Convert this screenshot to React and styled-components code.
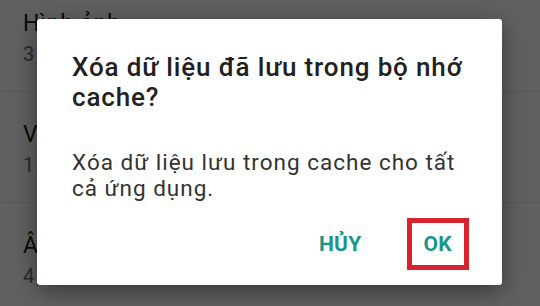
import React from 'react';
import styled, { createGlobalStyle } from 'styled-components';

const GlobalStyle = createGlobalStyle`
    html, body {
        margin: 0;
        padding: 0;
        background: #ffffff;
    }
    body {
        font-family: Roboto, "Noto Sans", "Liberation Sans", sans-serif;
    }
`;

const Screen = styled.div`
    position: relative;
    width: 540px;
    height: 306px;
    overflow: hidden;
    background: #ffffff;
`;

// settings list, scrolled a little so the first row is cut at the top
const List = styled.ul`
    list-style: none;
    margin: -19px 0 0;
    padding: 0;
`;

const Row = styled.li`
    box-sizing: border-box;
    height: 111px;
    padding: 29px 0 0 23px;
    border-bottom: 1px solid #e4e4e4;
`;

const RowTitle = styled.div`
    font-size: 23px;
    line-height: 28px;
    letter-spacing: 0.8px;
    color: #1c1c1c;
`;

const RowSub = styled.div`
    margin-top: 4px;
    font-size: 20px;
    line-height: 24px;
    letter-spacing: 2px;
    color: #6f6f6f;
`;

const Backdrop = styled.div`
    position: absolute;
    inset: 0;
    background: rgba(0, 0, 0, 0.62);
`;

const Dialog = styled.div`
    position: absolute;
    left: 37px;
    top: 19px;
    width: 465px;
    box-sizing: border-box;
    padding: 33px 30px 15px 35px;
    background: #ffffff;
    border-radius: 3px;
    box-shadow: 0 6px 24px rgba(0, 0, 0, 0.45);
    display: flex;
    flex-direction: column;
`;

const Title = styled.h2`
    margin: 0;
    font-size: 26px;
    line-height: 30px;
    font-weight: 500;
    letter-spacing: 0.85px;
    color: #212121;
`;

const Message = styled.p`
    margin: 38px 0 0;
    font-size: 22.5px;
    line-height: 25.5px;
    font-weight: 400;
    letter-spacing: 1px;
    color: #333333;
`;

const Actions = styled.div`
    margin-top: 17px;
    margin-right: 3px;
    display: flex;
    justify-content: flex-end;
    align-items: center;
    gap: 28px;
`;

const Button = styled.button`
    box-sizing: border-box;
    height: 52px;
    min-width: 61px;
    padding: 0 12px;
    border: ${({ $marked }) => ($marked ? '5px solid #d8232e' : '5px solid transparent')};
    background: transparent;
    font-family: Roboto, "Liberation Sans", sans-serif;
    font-size: 21px;
    font-weight: 700;
    color: #17978a;
    letter-spacing: 0.3px;
    cursor: pointer;
`;

const rows = [
    { title: 'Hình ảnh', sub: '3,52 GB' },
    { title: 'Video', sub: '1,24 GB' },
    { title: 'Âm thanh', sub: '4,18 MB' },
];

const App = () => {
    return (
        <Screen>
            <GlobalStyle />
            <List>
                {rows.map((r) => (
                    <Row key={r.title}>
                        <RowTitle>{r.title}</RowTitle>
                        <RowSub>{r.sub}</RowSub>
                    </Row>
                ))}
            </List>
            <Backdrop />
            <Dialog>
                <Title>Xóa dữ liệu đã lưu trong bộ nhớ cache?</Title>
                <Message>Xóa dữ liệu lưu trong cache cho tất cả ứng dụng.</Message>
                <Actions>
                    <Button>HỦY</Button>
                    <Button $marked>OK</Button>
                </Actions>
            </Dialog>
        </Screen>
    );
};

export default App;
